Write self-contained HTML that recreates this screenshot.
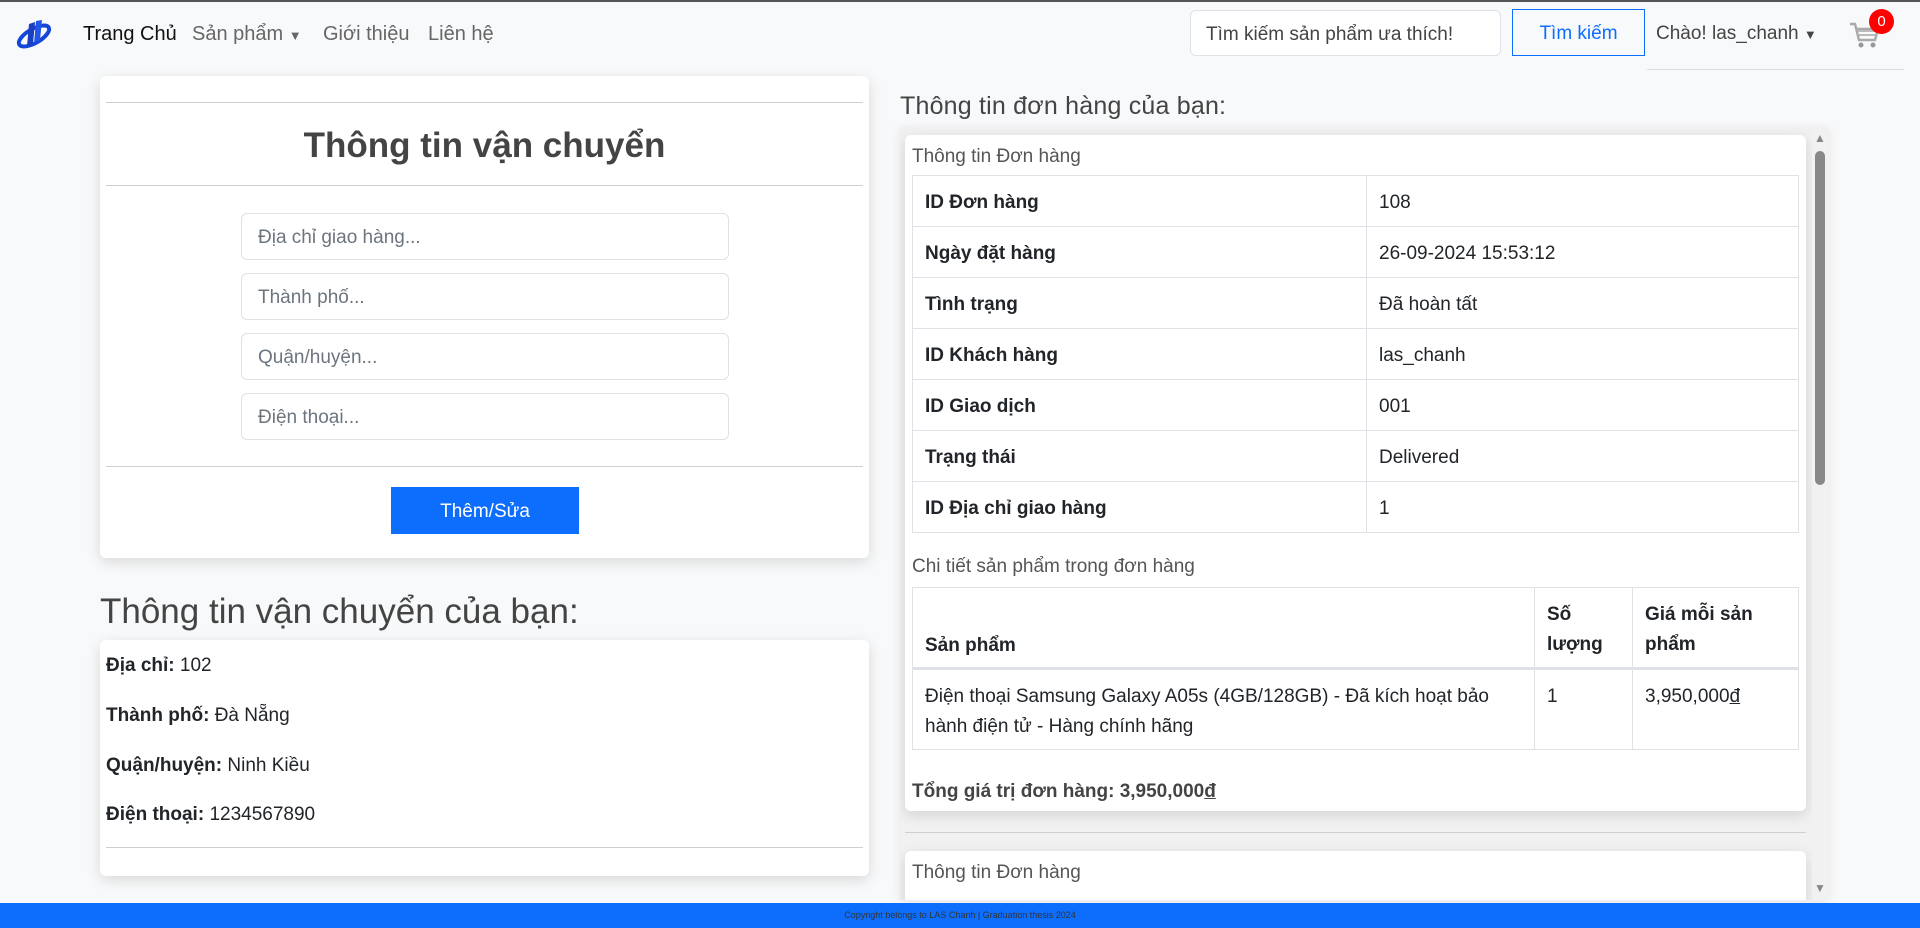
<!DOCTYPE html>
<html><head><meta charset="utf-8">
<style>
*{box-sizing:border-box;margin:0;padding:0}
body{width:1920px;height:928px;overflow:hidden;background:#f8f9fa;font-family:"Liberation Sans","DejaVu Sans",sans-serif;color:#212529;position:relative;font-size:19px}
.abs{position:absolute}
.nav{left:0;top:0;width:1920px;height:70px;border-top:2px solid #555;background:#f8f9fa}
.nl{top:23px;font-size:20px;color:#666}
.card{background:#fff;border-radius:6px;box-shadow:0 4px 14px rgba(0,0,0,.13)}
.hr{height:1px;background:#cfcfcf}
.inp{left:141px;width:488px;height:47px;border:1px solid #dee2e6;border-radius:6px;padding:13px 16px;color:#6c757d;font-size:19px}
table{border-collapse:collapse;width:100%}
td,th{border:1px solid #dee2e6;padding:0 12px;text-align:left;vertical-align:middle;font-size:19px}
th{font-weight:bold}
</style></head><body>
<div class="abs nav"></div>
<svg class="abs" style="left:15px;top:18px" width="38" height="32" viewBox="0 0 38 32"><ellipse cx="19" cy="18" rx="17" ry="7" transform="rotate(-30 19 18)" fill="none" stroke="#1446d8" stroke-width="4"/><path d="M14 6 L20 4 L18 26 L12 28Z" fill="#1a3fbf"/><path d="M21 3 L27 2 L25 22 L19 25Z" fill="#2456e6"/></svg>
<div class="abs nl" style="left:83px;color:#111">Trang Chủ</div>
<div class="abs nl" style="left:192px">Sản phẩm <span style="font-size:13px">▼</span></div>
<div class="abs nl" style="left:323px">Giới thiệu</div>
<div class="abs nl" style="left:428px">Liên hệ</div>
<div class="abs" style="left:1190px;top:10px;width:311px;height:46px;background:#fff;border:1px solid #dee2e6;border-radius:6px;padding:13px 15px;font-size:19px;color:#444">Tìm kiếm sản phẩm ưa thích!</div>
<div class="abs" style="left:1512px;top:9px;width:133px;height:47px;border:1px solid #0d6efd;color:#0d6efd;text-align:center;line-height:47px;font-size:19px">Tìm kiếm</div>
<div class="abs nl" style="left:1656px;top:23px;color:#444;font-size:19px">Chào! las_chanh <span style="font-size:13px">▼</span></div>
<div class="abs hr" style="left:1647px;top:69px;width:257px;background:#ddd"></div>
<svg class="abs" style="left:1848px;top:20px" width="32" height="30" viewBox="0 0 32 30"><path d="M2 4h5l4 16h16l3-11H9" fill="none" stroke="#aaa" stroke-width="2.5"/><path d="M10 11h19M11 15h16" stroke="#bbb" stroke-width="2"/><circle cx="13" cy="25" r="2.5" fill="#999"/><circle cx="25" cy="25" r="2.5" fill="#999"/></svg>
<div class="abs" style="left:1869px;top:9px;width:25px;height:25px;border-radius:50%;background:#f00;color:#fff;font-size:15px;text-align:center;line-height:25px">0</div>

<div class="abs card" style="left:100px;top:76px;width:769px;height:482px">
 <div class="abs hr" style="left:6px;top:26px;width:757px"></div>
 <div class="abs" style="left:0;top:50px;width:769px;text-align:center;font-size:35px;font-weight:bold;color:#444">Thông tin vận chuyển</div>
 <div class="abs hr" style="left:6px;top:109px;width:757px"></div>
 <div class="abs inp" style="top:137px">Địa chỉ giao hàng...</div>
 <div class="abs inp" style="top:197px">Thành phố...</div>
 <div class="abs inp" style="top:257px">Quận/huyện...</div>
 <div class="abs inp" style="top:317px">Điện thoại...</div>
 <div class="abs hr" style="left:6px;top:390px;width:757px"></div>
 <div class="abs" style="left:291px;top:411px;width:188px;height:47px;background:#0d6efd;color:#fff;text-align:center;line-height:49px;font-size:19px">Thêm/Sửa</div>
</div>
<div class="abs" style="left:100px;top:592px;font-size:35px;color:#444">Thông tin vận chuyển của bạn:</div>
<div class="abs card" style="left:100px;top:640px;width:769px;height:236px;font-size:19px">
 <div class="abs" style="left:6px;top:15px"><b>Địa chỉ:</b> 102</div>
 <div class="abs" style="left:6px;top:65px"><b>Thành phố:</b> Đà Nẵng</div>
 <div class="abs" style="left:6px;top:115px"><b>Quận/huyện:</b> Ninh Kiều</div>
 <div class="abs" style="left:6px;top:164px"><b>Điện thoại:</b> 1234567890</div>
 <div class="abs hr" style="left:6px;top:207px;width:757px"></div>
</div>

<div class="abs" style="left:900px;top:92px;font-size:25px;color:#444;letter-spacing:0.2px">Thông tin đơn hàng của bạn:</div>
<div class="abs" style="left:900px;top:127px;width:929px;height:773px;background:#f1f1f1;overflow:hidden;box-shadow:0 2px 10px rgba(0,0,0,.08)">
 <div class="abs card" style="left:5px;top:8px;width:901px;height:676px">
  <div class="abs" style="left:7px;top:11px;color:#555;font-size:19px">Thông tin Đơn hàng</div>
  <div class="abs" style="left:7px;top:40px;width:887px">
   <table>
    <tr style="height:51px"><th style="width:454px;padding-top:4px">ID Đơn hàng</th><td style="padding-top:4px">108</td></tr>
    <tr style="height:51px"><th style="padding-top:4px">Ngày đặt hàng</th><td style="padding-top:4px">26-09-2024 15:53:12</td></tr>
    <tr style="height:51px"><th style="padding-top:4px">Tình trạng</th><td style="padding-top:4px">Đã hoàn tất</td></tr>
    <tr style="height:51px"><th style="padding-top:4px">ID Khách hàng</th><td style="padding-top:4px">las_chanh</td></tr>
    <tr style="height:51px"><th style="padding-top:4px">ID Giao dịch</th><td style="padding-top:4px">001</td></tr>
    <tr style="height:51px"><th style="padding-top:4px">Trạng thái</th><td style="padding-top:4px">Delivered</td></tr>
    <tr style="height:51px"><th style="padding-top:4px">ID Địa chỉ giao hàng</th><td style="padding-top:4px">1</td></tr>
   </table>
  </div>
  <div class="abs" style="left:7px;top:421px;color:#555;font-size:19px">Chi tiết sản phẩm trong đơn hàng</div>
  <div class="abs" style="left:7px;top:452px;width:887px">
   <table style="line-height:30px">
    <tr style="height:81px;border-bottom:3px solid #dee2e6"><th style="width:622px;vertical-align:bottom;padding-bottom:6px">Sản phẩm</th><th style="width:98px;padding-top:4px">Số<br>lượng</th><th style="padding-top:4px">Giá mỗi sản<br>phẩm</th></tr>
    <tr style="height:81px"><td style="vertical-align:top;padding-top:12px">Điện thoại Samsung Galaxy A05s (4GB/128GB) - Đã kích hoạt bảo<br>hành điện tử - Hàng chính hãng</td><td style="vertical-align:top;padding-top:12px">1</td><td style="vertical-align:top;padding-top:12px">3,950,000<u>đ</u></td></tr>
   </table>
  </div>
  <div class="abs" style="left:7px;top:646px;font-weight:bold;color:#444;font-size:19px">Tổng giá trị đơn hàng: 3,950,000<u>đ</u></div>
 </div>
 <div class="abs hr" style="left:5px;top:705px;width:901px"></div>
 <div class="abs card" style="left:5px;top:724px;width:901px;height:80px">
  <div class="abs" style="left:7px;top:11px;color:#555;font-size:19px">Thông tin Đơn hàng</div>
 </div>
 <div class="abs" style="left:912px;top:0;width:17px;height:773px;background:#f1f1f1"></div>
 <div class="abs" style="left:915px;top:24px;width:10px;height:334px;background:#888;border-radius:5px"></div>
 <div class="abs" style="left:914px;top:4px;font-size:12px;color:#888">▲</div>
 <div class="abs" style="left:914px;top:754px;font-size:12px;color:#888">▼</div>
</div>
<div class="abs" style="left:0;top:903px;width:1920px;height:25px;background:#0d6efd;text-align:center;font-size:9px;line-height:25px;color:#333">Copyright belongs to LAS Chanh | Graduation thesis 2024</div>
</body></html>
